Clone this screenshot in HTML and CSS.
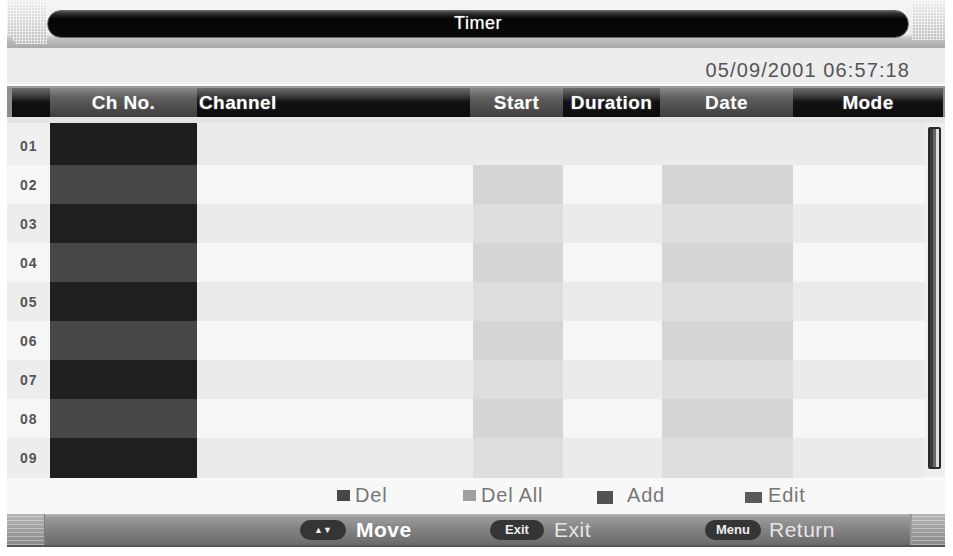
FILE: index.html
```html
<!DOCTYPE html>
<html lang="en">

<head>
    <meta charset="UTF-8">
    <meta name="viewport" content="width=device-width, initial-scale=1.0">
    <title>Timer</title>
    <link rel="stylesheet" href="styles.css">
</head>

<body>

    <div class="screen">

        <!-- 标题栏 -->
        <div class="titlebar">
            <div class="corner corner-l"></div>
            <div class="title-pill">Timer</div>
            <div class="corner corner-r"></div>
        </div>

        <div class="datebar">05/09/2001 06:57:18</div>

        <!-- 表头 -->
        <div class="thead">
            <div class="th th-dark"></div>
            <div class="th th-grey">Ch No.</div>
            <div class="th th-dark th-left">Channel</div>
            <div class="th th-grey">Start</div>
            <div class="th th-dark">Duration</div>
            <div class="th th-grey">Date</div>
            <div class="th th-dark">Mode</div>
        </div>

        <div class="tbody">
            <div class="rows">
                <div class="row row-sel">
                    <div class="num">01</div>
                    <div class="ch"></div>
                    <div class="name"></div>
                    <div class="start"></div>
                    <div class="dur"></div>
                    <div class="date"></div>
                    <div class="mode"></div>
                </div>
                <div class="row row-even">
                    <div class="num">02</div>
                    <div class="ch"></div>
                    <div class="name"></div>
                    <div class="start"></div>
                    <div class="dur"></div>
                    <div class="date"></div>
                    <div class="mode"></div>
                </div>
                <div class="row row-odd">
                    <div class="num">03</div>
                    <div class="ch"></div>
                    <div class="name"></div>
                    <div class="start"></div>
                    <div class="dur"></div>
                    <div class="date"></div>
                    <div class="mode"></div>
                </div>
                <div class="row row-even">
                    <div class="num">04</div>
                    <div class="ch"></div>
                    <div class="name"></div>
                    <div class="start"></div>
                    <div class="dur"></div>
                    <div class="date"></div>
                    <div class="mode"></div>
                </div>
                <div class="row row-odd">
                    <div class="num">05</div>
                    <div class="ch"></div>
                    <div class="name"></div>
                    <div class="start"></div>
                    <div class="dur"></div>
                    <div class="date"></div>
                    <div class="mode"></div>
                </div>
                <div class="row row-even">
                    <div class="num">06</div>
                    <div class="ch"></div>
                    <div class="name"></div>
                    <div class="start"></div>
                    <div class="dur"></div>
                    <div class="date"></div>
                    <div class="mode"></div>
                </div>
                <div class="row row-odd">
                    <div class="num">07</div>
                    <div class="ch"></div>
                    <div class="name"></div>
                    <div class="start"></div>
                    <div class="dur"></div>
                    <div class="date"></div>
                    <div class="mode"></div>
                </div>
                <div class="row row-even">
                    <div class="num">08</div>
                    <div class="ch"></div>
                    <div class="name"></div>
                    <div class="start"></div>
                    <div class="dur"></div>
                    <div class="date"></div>
                    <div class="mode"></div>
                </div>
                <div class="row row-odd">
                    <div class="num">09</div>
                    <div class="ch"></div>
                    <div class="name"></div>
                    <div class="start"></div>
                    <div class="dur"></div>
                    <div class="date"></div>
                    <div class="mode"></div>
                </div>
            </div>
            <div class="scroll">
                <div class="scroll-track"></div>
            </div>
        </div>

        <!-- 彩色按键说明 -->
        <div class="legend">
            <div class="key"><span class="sq sq-del"></span>Del</div>
            <div class="key"><span class="sq sq-delall"></span>Del All</div>
            <div class="key"><span class="sq sq-add"></span>Add</div>
            <div class="key"><span class="sq sq-edit"></span>Edit</div>
        </div>

        <!-- 底部操作提示 -->
        <div class="footbar">
            <div class="corner-foot"></div>
            <div class="hints">
                <div class="hint hint-move"><span class="btn">&#9650;&#9660;</span><b>Move</b></div>
                <div class="hint hint-exit"><span class="btn">Exit</span>Exit</div>
                <div class="hint hint-menu"><span class="btn">Menu</span>Return</div>
            </div>
            <div class="corner-foot corner-foot-r"></div>
        </div>
    </div>

</body>

</html>
```

FILE: styles.css
```css
* {
    margin: 0;
    padding: 0;
    box-sizing: border-box;
}

body {
    background: #fff;
    font-family: "Liberation Sans", Arial, sans-serif;
    height: 556px;
    overflow: hidden;
}

.screen {
    width: 938px;
    margin-left: 7px;
    background: #ececec;
}

/* 标题栏 */
.titlebar {
    height: 48px;
    display: flex;
    align-items: flex-start;
    background: linear-gradient(#f6f6f6 0, #ececec 34px, #c4c4c4 38px, #a9a9a9 48px);
}

.corner {
    width: 40px;
    height: 44px;
    background-color: #d6d6d6;
    background-image:
        repeating-linear-gradient(90deg, rgba(255, 255, 255, .6) 0 1px, transparent 1px 3px),
        repeating-linear-gradient(0deg, rgba(255, 255, 255, .5) 0 1px, transparent 1px 3px),
        linear-gradient(#eee, #bdbdbd);
}

.corner-l {
    clip-path: polygon(0 0, 100% 0, 100% 100%, 22% 100%, 0 70%);
}

.corner-r {
    width: 33px;
    height: 40px;
    margin-left: 3px;
    background-color: #e4e4e4;
}

.title-pill {
    flex: 1;
    height: 28px;
    margin-top: 10px;
    border-radius: 14px;
    border: 1px solid #6a6a6a;
    background: linear-gradient(#5a5a5a 0, #2a2a2a 3px, #050505 8px, #0a0a0a 100%);
    color: #fff;
    font-size: 18px;
    line-height: 25px;
    text-align: center;
    text-shadow: 0 0 1px #aaa;
    letter-spacing: 0.5px;
}

.datebar {
    height: 38px;
    padding-right: 35px;
    text-align: right;
    font-size: 20px;
    letter-spacing: 1.1px;
    line-height: 44px;
    color: #555;
    background: #ededed;
    border-bottom: 2px solid #f8f8f8;
}

/* 表头 */
.thead {
    height: 31px;
    display: grid;
    grid-template-columns: 38px 147px 273px 93px 97px 133px 150px;
    border-top: 2px solid #9a9a9a;
    padding-left: 5px;
    background: #8d8d8d;
}

.th {
    color: #fff;
    font-size: 19px;
    font-weight: bold;
    letter-spacing: 0.4px;
    text-align: center;
    line-height: 29px;
    text-shadow: 0 0 2px #777;
}

.th-left {
    text-align: left;
    padding-left: 2px;
}

.th-dark {
    background: linear-gradient(#6d6d6d 0, #3d3d3d 8px, #111 14px, #0c0c0c 100%);
}

.th-grey {
    background: linear-gradient(#8a8a8a 0, #5e5e5e 10px, #3e3e3e 100%);
}

.tbody {
    display: flex;
    border-top: 6px solid #e4e4e4;
}

.rows {
    flex: 1;
}

.row {
    height: 39px;
    display: grid;
    grid-template-columns: 43px 147px 276px 90px 99px 131px 132px;
}

.row-sel {
    height: 42px;
}

.num {
    font-size: 14px;
    font-weight: bold;
    letter-spacing: 1px;
    color: #555;
    padding-left: 13px;
    line-height: 40px;
}

.row-sel .num {
    line-height: 46px;
}

.row-sel .num {
    background: #efefef;
}

.row-sel .ch {
    background: #1e1e1e;
    margin-right: -2px;
}

.row-sel .name,
.row-sel .start,
.row-sel .dur,
.row-sel .date,
.row-sel .mode {
    background: #ebebeb;
}

.row-even .num,
.row-even .name,
.row-even .dur,
.row-even .mode {
    background: #f6f6f6;
}

.row-even .ch {
    background: #474747;
}

.row-even .start,
.row-even .date {
    background: #d5d5d5;
}

.row-odd .num {
    background: #ededed;
}

.row-odd .name,
.row-odd .dur,
.row-odd .mode {
    background: #ebebeb;
}

.row-odd .ch {
    background: #202020;
}

.row-odd .start,
.row-odd .date {
    background: #dedede;
}

/* 滚动条 */
.scroll {
    width: 20px;
    padding: 4px 4px 8px 3px;
    background: #eeeeee;
}

.scroll-track {
    height: 100%;
    border: 2px solid #2a2a2a;
    border-radius: 2px;
    background: linear-gradient(90deg, #3a3a3a 0 3px, #666 3px 6px, #ddd 6px 100%);
}

/* 按键说明 */
.legend {
    height: 37px;
    display: grid;
    grid-template-columns: 126px 134px 148px auto;
    padding-left: 330px;
    align-items: center;
    background: #f8f8f8;
    color: #777;
    font-size: 20px;
    letter-spacing: 0.8px;
}

.key {
    display: flex;
    align-items: center;
}

.sq {
    display: inline-block;
    width: 13px;
    height: 11px;
    margin-right: 5px;
}

.sq-del {
    background: #474747;
}

.sq-delall {
    background: #a0a0a0;
}

.sq-add {
    width: 16px;
    height: 13px;
    margin-right: 14px;
    margin-top: 4px;
    background: #525252;
}

.sq-edit {
    width: 17px;
    height: 11px;
    margin-right: 6px;
    margin-top: 3px;
    background: #5a5a5a;
}

/* 底部栏 */
.footbar {
    height: 33px;
    display: flex;
    background: linear-gradient(#bdbdbd 0, #9c9c9c 3px, #858585 14px, #6a6a6a 100%);
    border-bottom: 2px solid #555;
}

.corner-foot {
    width: 38px;
    background-color: #9a9a9a;
    background-image:
        repeating-linear-gradient(0deg, rgba(255, 255, 255, .35) 0 1px, transparent 1px 4px),
        linear-gradient(#b5b5b5, #888);
    border-right: 1px solid #7a7a7a;
}

.corner-foot-r {
    width: 35px;
    border-right: none;
    border-left: 2px solid #999;
}

.hints {
    flex: 1;
    display: grid;
    grid-template-columns: 190px 215px auto;
    padding-left: 255px;
    align-items: center;
}

.hint {
    display: flex;
    align-items: center;
    color: #e6e6e6;
    font-size: 21px;
    letter-spacing: 0.5px;
}

.hint b {
    color: #fff;
}

.btn {
    display: inline-block;
    height: 20px;
    border-radius: 10px;
    background: #353535;
    color: #eee;
    font-size: 13px;
    font-weight: bold;
    letter-spacing: 0;
    line-height: 20px;
    text-align: center;
    margin-right: 10px;
}

.hint-move .btn {
    width: 46px;
    font-size: 9px;
}

.hint-exit .btn {
    width: 54px;
}

.hint-menu .btn {
    width: 56px;
    margin-right: 8px;
}
```
